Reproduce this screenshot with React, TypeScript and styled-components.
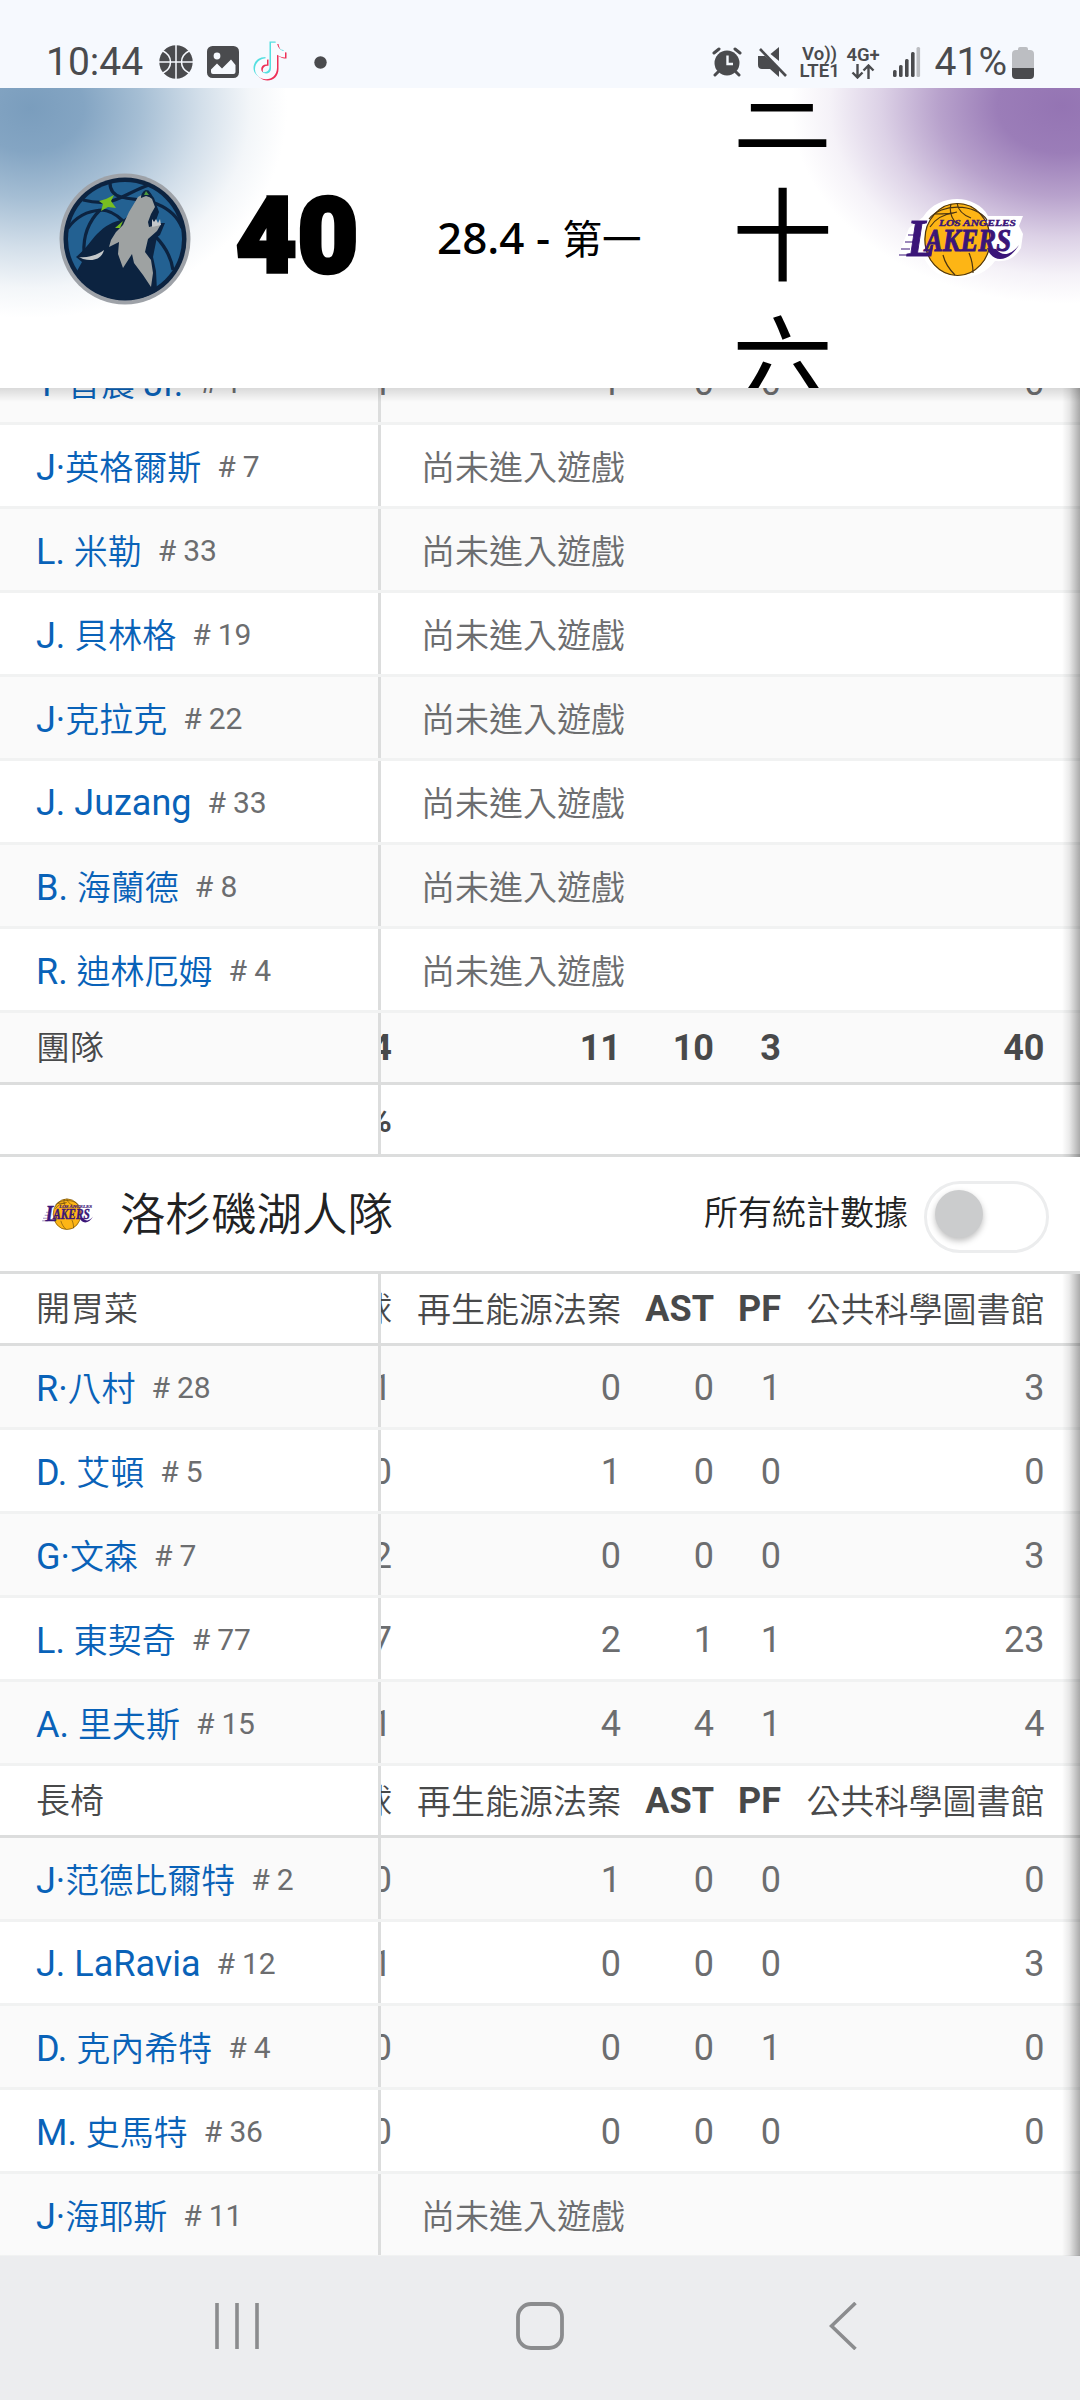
import React from "react";
import styled, { createGlobalStyle } from "styled-components";

const GlobalStyle = createGlobalStyle`
  * {
    box-sizing: border-box;
  }
  body {
    margin: 0;
    background: #fff;
    font-family: Roboto, "Noto Sans CJK TC", sans-serif;
  }
`;

const Screen = styled.div`
  width: 1080px;
  height: 2400px;
  display: flex;
  flex-direction: column;
  overflow: hidden;
  background: #fff;
`;

/* ---------- status bar ---------- */

const StatusBar = styled.div`
  flex: none;
  height: 88px;
  padding: 36px 46px 0 46px;
  display: flex;
  justify-content: space-between;
  background: #f6f9fe;
  color: #4a4b4e;
`;
const StatusGroup = styled.div`
  display: flex;
  align-items: center;
  height: 52px;
`;
const StatusText = styled.span<{ $left?: number }>`
  margin-left: ${(p) => p.$left ?? 0}px;
  font-size: 39px;
  line-height: 52px;
`;
const NetworkLabel = styled.div<{ $left: number; $width: number }>`
  margin-left: ${(p) => p.$left}px;
  width: ${(p) => p.$width}px;
  padding-top: 1px;
  display: flex;
  flex-direction: column;
  align-items: center;
  font-size: 18.5px;
  font-weight: 600;
  line-height: 17px;
  white-space: nowrap;
`;
const StatusIcon = styled.svg<{ $left: number }>`
  flex: none;
  margin-left: ${(p) => p.$left}px;
`;

/* ---------- scoreboard ---------- */

const Scoreboard = styled.div`
  flex: none;
  height: 300px;
  padding-left: 59px;
  display: flex;
  align-items: center;
  overflow: hidden;
  color: #000;
  background: radial-gradient(
      ellipse 245px 200px at 30px 20px,
      #7a9dbd 0%,
      #84a5c3 22%,
      #a5bed4 45%,
      #d3dfea 70%,
      #f3f6f9 90%,
      rgba(255, 255, 255, 0) 105%
    ),
    radial-gradient(
      ellipse 258px 188px at 1062px 18px,
      #9474b3 0%,
      #9b7db8 25%,
      #b8a2cc 48%,
      #dcd1e6 70%,
      #f5f2f8 90%,
      rgba(255, 255, 255, 0) 105%
    ),
    #fff;
`;
const ScoreboardShade = styled.div`
  position: relative;
  z-index: 1;
  flex: none;
  height: 0;
  &::after {
    content: "";
    position: absolute;
    top: 0;
    left: 0;
    right: 0;
    height: 14px;
    background: linear-gradient(rgba(0, 0, 0, 0.13), rgba(0, 0, 0, 0));
  }
`;
const HomeScore = styled.div`
  width: 122px;
  margin-left: 45px;
  padding-bottom: 3px;
  font-size: 104px;
  font-weight: 900;
  line-height: 120px;
  letter-spacing: 1.5px;
  -webkit-text-stroke: 4.5px #000;
`;
const GameClock = styled.div`
  width: 208px;
  margin-left: 79px;
  padding-bottom: 3px;
  font-family: "Noto Sans", "Noto Sans CJK TC", sans-serif;
  font-size: 44px;
  font-weight: 500;
  line-height: 60px;
  white-space: pre;
`;
const ClockPeriod = styled.span`
  margin-left: 1px;
  font-family: "Noto Sans CJK TC", sans-serif;
  font-size: 39.5px;
  font-weight: 400;
`;
const AwayScore = styled.div`
  width: 102px;
  margin: -18px 0 0 87px;
  display: flex;
  flex-direction: column;
  font-family: "Noto Sans CJK TC", sans-serif;
  font-size: 101px;
  font-weight: 400;
  line-height: 127px;
`;
const LogoSlot = styled.div<{ $left?: number }>`
  flex: none;
  display: flex;
  margin: 2px 0 0 ${(p) => p.$left ?? 0}px;
`;

/* ---------- box score ---------- */

const Sheet = styled.div`
  flex: 1;
  min-height: 0;
  overflow: hidden;
`;
const Scrolled = styled.div`
  margin-top: -47px;
`;
const TableWrap = styled.div`
  position: relative;
  &::after {
    content: "";
    position: absolute;
    top: 0;
    right: 0;
    bottom: 0;
    width: 18px;
    background: linear-gradient(
      to right,
      rgba(0, 0, 0, 0),
      rgba(0, 0, 0, 0.08) 40%,
      rgba(0, 0, 0, 0.33)
    );
  }
`;
const Row = styled.div<{ $kind: "player" | "head" | "total"; $shaded?: boolean }>`
  height: ${(p) => (p.$kind === "player" ? 84 : 72)}px;
  display: flex;
  padding-bottom: ${(p) => (p.$kind === "player" ? 0 : 3)}px;
  border-bottom: 3px solid ${(p) => (p.$kind === "player" ? "#f1f2f2" : "#dcdddd")};
  background: ${(p) => (p.$shaded ? "#fafafa" : "#fff")};
  font-size: 36px;
  color: ${(p) => (p.$kind === "player" ? "#6c6d6f" : "#48494a")};
  font-weight: ${(p) => (p.$kind === "player" ? 400 : 700)};
`;
const NameCell = styled.div<{ $short?: boolean }>`
  flex: none;
  width: 381px;
  margin-bottom: ${(p) => (p.$short ? -3 : 0)}px;
  padding: ${(p) => (p.$short ? "0 0 4px 36px" : "2px 0 0 36px")};
  display: flex;
  align-items: center;
  border-right: 3px solid #dcdddd;
  white-space: pre;
`;
const PlayerName = styled.a`
  color: #0962b8;
  line-height: 50px;
`;
const Jersey = styled.span`
  margin-left: 16px;
  font-size: 30px;
  letter-spacing: -0.2px;
`;
const Stats = styled.div`
  flex: 1;
  display: grid;
  grid-template-columns: 11px 229px 93px 67px 263.5px;
  align-items: center;
  overflow: hidden;
`;
const Stat = styled.div`
  display: flex;
  justify-content: flex-end;
  overflow: hidden;
  white-space: nowrap;
  line-height: 50px;
  padding-top: 3px;
`;
const PercentSign = styled.span`
  font-size: 34px;
`;
const NotPlayed = styled.div`
  padding: 1px 0 0 40px;
  align-self: center;
`;
const Cjk = styled.span<{ $size?: number }>`
  font-family: "Noto Sans CJK TC", sans-serif;
  font-size: ${(p) => p.$size ?? 34}px;
  font-weight: 350;
  line-height: 50px;
`;

const TeamHeader = styled.div`
  height: 117px;
  padding: 0 31px 0 42px;
  display: flex;
  align-items: center;
  border-bottom: 3px solid #dcdddd;
  color: #212223;
`;
const TeamName = styled.h2`
  margin: 0 auto 5px 25px;
  font-weight: 400;
`;
const ToggleLabel = styled.div`
  padding-bottom: 6px;
`;
const Toggle = styled.div`
  width: 125px;
  height: 72px;
  margin: 5px 0 0 16px;
  padding: 6px 8px;
  border: 3px solid #ecedee;
  border-radius: 36px;
`;
const Knob = styled.div`
  width: 48px;
  height: 48px;
  border-radius: 50%;
  background: #cbcccd;
  box-shadow: 0 3px 6px rgba(0, 0, 0, 0.25);
`;

/* ---------- navigation bar ---------- */

const NavBar = styled.div`
  flex: none;
  height: 144px;
  padding: 0 1px 4px 0;
  display: grid;
  grid-template-columns: repeat(3, 303px);
  justify-content: center;
  align-items: center;
  justify-items: center;
  background: #ecedef;
`;

const cjkRun = /([\u4e00-\u9fff]+)/;

const Mixed: React.FC<{ text: string; size?: number }> = ({ text, size }) => (
  <span>
    {text.split(cjkRun).map((part, i) =>
      cjkRun.test(part) ? (
        <Cjk key={i} $size={size}>
          {part}
        </Cjk>
      ) : (
        part
      )
    )}
  </span>
);

const WolvesLogo = () => (
  <svg width="132" height="132" viewBox="0 0 132 132">
    <circle cx="66" cy="66" r="65.5" fill="#9ea2a8" />
    <circle cx="66" cy="66" r="61.5" fill="#0c2340" />
    <circle cx="66" cy="66" r="57" fill="#236192" />
    <g fill="none" stroke="#0c2340" strokeWidth="3.2">
      <path d="M51 10c0 7 4 12 11 14 12 3 24 2 36 7 12 5 21 13 25 24" />
      <path d="M24 27c8 2 16 3 24 2 14-2 24-11 42-17" />
      <path d="M9 55c8-11 19-17 33-18 9 0 16 5 22 11" />
      <path d="M25 80c-1-17 4-31 16-43" />
      <path d="M96 63c9 9 16 20 18 34" />
    </g>
    <path
      d="M64 47c-10 1-18 6-26 14-6 6-10 14-21 23l6 5-5 9c8 15 24 29 47 29 14 0 25-4 33-9l-1-20-3-14 4-20-12-34z"
      fill="#0c2340"
    />
    <path
      d="M84 22l5-5 6 8 5 14-4 11 10 0-5 12-11 8-4 10 8 9 1 26-16-22z"
      fill="#0c2340"
    />
    <path
      d="M86 20l7 6 3 8-4 7-3 8 1 5 12-3-4 7-9 8-3 13 6 8 2 13-2 14-8-12-9-12-2-9-9 14-5-14 1-12-10 5 2-7 5-8 7-7 6-13 9-15z"
      fill="#9ea2a2"
    />
    <path d="M93 46l2 3 2-3 2 4 2-4 1 6-9 2z" fill="#c4c8ca" />
    <path d="M82 25c0-4 2-7 5-8 4 1 6 4 6 8l-6-2z" fill="#0c2340" />
    <path d="M85 22l2-4 3 4z" fill="#4c9a3f" />
    <path d="M40 28l7-2 8-4-3 6 5 7-8-1-7 4 2-7z" fill="#78be21" />
    <path d="M64 48l-8 7 5 0z" fill="#78be21" />
    <path d="M20 84c10 1 18-2 25-7-2 8-9 12-21 9z" fill="#c4c8ca" />
  </svg>
);

const LakersLogo: React.FC<{ width: number; height: number }> = ({ width, height }) => (
  <svg width={width} height={height} viewBox="0 0 124 80">
    <path
      d="M24 18C32 5 46 0 58 0s26 6 31 17h35l-4 10 4 8-2 14c-6 10-14 14-26 13-8 11-20 17-38 17-16 0-27-7-33-20H0l2-10 8-20z"
      fill="#fff"
    />
    <ellipse cx="58.5" cy="40.5" rx="33" ry="36.5" fill="#fdb515" />
    <g fill="none" stroke="#4a3412" strokeWidth="1.2">
      <path d="M30 20C42 4 76 4 88 21M31 28c6-9 14-13 24-14M52 5c-2 8 0 14 6 20M58 4c1 7 6 12 14 15M36 15c8 0 16 0 22-2M44 56c2 8 6 14 12 20M70 54c3 7 4 12 4 20" />
      <ellipse cx="58.5" cy="40.5" rx="32.6" ry="36" />
    </g>
    <g
      fill="#3a1578"
      fontFamily="Liberation Serif, serif"
      fontStyle="italic"
      fontWeight="700"
    >
      <g stroke="#3a1578" strokeWidth="1">
        <text x="8" y="56.5" fontSize="53" textLength="28" lengthAdjust="spacingAndGlyphs">
          L
        </text>
        <text x="26" y="51.5" fontSize="32" textLength="86" lengthAdjust="spacingAndGlyphs">
          AKERS
        </text>
        <text x="40" y="27" fontSize="9" strokeWidth="0.4" textLength="77" lengthAdjust="spacingAndGlyphs">
          LOS ANGELES
        </text>
      </g>
    </g>
    <path d="M88 49c6 16 22 14 32-3-7 9-16 13-23 4z" fill="#3a1578" />
    <path d="M14 24h12M9 36h9M6 43h9M2 50h9M0 56h14" stroke="#3a1578" strokeWidth="1.1" />
  </svg>
);

const BasketballIcon = () => (
  <StatusIcon $left={16} width="34" height="34" viewBox="0 0 34 34">
    <circle cx="17" cy="17" r="16.7" fill="#4a4b4e" />
    <path
      d="M17 0v34M0 17h34M4 6c10 5 10 17 0 22M30 6c-10 5-10 17 0 22"
      fill="none"
      stroke="#f6f9fe"
      strokeWidth="1.5"
    />
  </StatusIcon>
);

const GalleryIcon = () => (
  <StatusIcon $left={14} width="32" height="32" viewBox="0 0 32 32">
    <rect width="32" height="32" rx="5.5" fill="#4a4b4e" />
    <circle cx="10" cy="10" r="3.4" fill="#f6f9fe" />
    <path d="M4 23.5l6-6 5 5 9-9 4.5 5.5V26a2 2 0 0 1-2 2H6a2 2 0 0 1-2-2z" fill="#f6f9fe" />
  </StatusIcon>
);

const notePath =
  "M19 1h6c.6 5 3.6 8 8 8.6v6c-3 0-5.800-1-8-2.600v13c0 7-5 11.500-11 11.500S3 33 3 27.500c0-6.500 5-11 12-11v6.300c-3.500-.4-5.800 1.700-5.800 4.500 0 2.600 2 4.400 4.700 4.400 3 0 5.100-2 5.100-5.600z";

const NoteIcon = () => (
  <StatusIcon $left={13} width="37" height="42" viewBox="0 0 37 42">
    <path d={notePath} transform="translate(1.5 2)" fill="#ee3057" />
    <path d={notePath} transform="translate(-1.5 -.5)" fill="#55dfe0" />
    <path d={notePath} transform="translate(0 .8)" fill="#f9fbff" />
  </StatusIcon>
);

const AlarmIcon = () => (
  <StatusIcon $left={0} width="30" height="30" viewBox="0 0 30 30">
    <g stroke="#4a4b4e" strokeWidth="3" strokeLinecap="round" fill="none">
      <path d="M2 6l5-4M28 6l-5-4M6 25l-3 3M24 25l3 3" />
    </g>
    <circle cx="15" cy="16" r="12.5" fill="#4a4b4e" />
    <path d="M15.5 8.5v8.5h5.5" fill="none" stroke="#f6f9fe" strokeWidth="2.4" />
  </StatusIcon>
);

const MuteIcon = () => (
  <StatusIcon $left={15} width="31" height="32" viewBox="0 0 31 32">
    <path d="M22 1v14L13.5 8z" fill="#4a4b4e" />
    <path d="M1 10h7l14 12v9l-9-8H5c-2.500 0-4-1.500-4-4z" fill="#4a4b4e" />
    <path d="M3 3l26 27" stroke="#4a4b4e" strokeWidth="2.6" />
  </StatusIcon>
);

const DataArrows = () => (
  <svg width="24" height="15" viewBox="0 0 24 15">
    <path
      d="M6.5 0v13M1.5 8.5l5 5 5-5M17.5 15V2M12.5 6.5l5-5 5 5"
      fill="none"
      stroke="#4a4b4e"
      strokeWidth="2.4"
    />
  </svg>
);

const SignalIcon = () => (
  <StatusIcon $left={13} width="28" height="30" viewBox="0 0 28 30">
    <g fill="#4a4b4e">
      <rect x="0" y="23" width="3.6" height="7" rx="1.5" />
      <rect x="6" y="18" width="3.6" height="12" rx="1.5" />
      <rect x="12" y="12" width="3.6" height="18" rx="1.5" />
      <rect x="18" y="5" width="3.6" height="25" rx="1.5" />
    </g>
    <rect x="23.5" y="0" width="3.6" height="30" rx="1.5" fill="#bcbec2" />
  </StatusIcon>
);

const BatteryIcon = () => (
  <StatusIcon $left={5} width="22" height="33" viewBox="0 0 22 33">
    <path d="M6 3a2 2 0 0 1 2-2h6a2 2 0 0 1 2 2v1h2a4 4 0 0 1 4 4v15H0V8a4 4 0 0 1 4-4h2z" fill="#bcbec2" />
    <path d="M0 22h22v7a4 4 0 0 1-4 4H4a4 4 0 0 1-4-4z" fill="#4a4b4e" />
  </StatusIcon>
);

interface Player {
  name: string;
  number: number;
  stats?: string[];
}

const wolvesBench: Player[] = [
  { name: "T·普農 Jr.", number: 1, stats: ["1", "1", "0", "0", "0"] },
  { name: "J·英格爾斯", number: 7 },
  { name: "L. 米勒", number: 33 },
  { name: "J. 貝林格", number: 19 },
  { name: "J·克拉克", number: 22 },
  { name: "J. Juzang", number: 33 },
  { name: "B. 海蘭德", number: 8 },
  { name: "R. 迪林厄姆", number: 4 },
];

const lakersStarters: Player[] = [
  { name: "R·八村", number: 28, stats: ["1", "0", "0", "1", "3"] },
  { name: "D. 艾頓", number: 5, stats: ["0", "1", "0", "0", "0"] },
  { name: "G·文森", number: 7, stats: ["2", "0", "0", "0", "3"] },
  { name: "L. 東契奇", number: 77, stats: ["7", "2", "1", "1", "23"] },
  { name: "A. 里夫斯", number: 15, stats: ["1", "4", "4", "1", "4"] },
];

const lakersBench: Player[] = [
  { name: "J·范德比爾特", number: 2, stats: ["0", "1", "0", "0", "0"] },
  { name: "J. LaRavia", number: 12, stats: ["1", "0", "0", "0", "3"] },
  { name: "D. 克內希特", number: 4, stats: ["0", "0", "0", "1", "0"] },
  { name: "M. 史馬特", number: 36, stats: ["0", "0", "0", "0", "0"] },
  { name: "J·海耶斯", number: 11 },
];

const headings = ["籃球", "再生能源法案", "AST", "PF", "公共科學圖書館"];

const StatCells: React.FC<{ values: string[] }> = ({ values }) => (
  <Stats>
    {values.map((value, i) => (
      <Stat key={i}>
        <Mixed text={value} />
      </Stat>
    ))}
  </Stats>
);

const PlayerRows: React.FC<{ players: Player[] }> = ({ players }) => (
  <>
    {players.map((player, i) => (
      <Row key={player.name} $kind="player" $shaded={i % 2 === 0}>
        <NameCell>
          <PlayerName>
            <Mixed text={player.name} />
          </PlayerName>
          <Jersey># {player.number}</Jersey>
        </NameCell>
        {player.stats ? (
          <StatCells values={player.stats} />
        ) : (
          <NotPlayed>
            <Cjk>尚未進入遊戲</Cjk>
          </NotPlayed>
        )}
      </Row>
    ))}
  </>
);

const HeadRow: React.FC<{ title: string }> = ({ title }) => (
  <Row $kind="head">
    <NameCell $short>
      <Mixed text={title} />
    </NameCell>
    <StatCells values={headings} />
  </Row>
);

const App: React.FC = () => {
  return (
    <>
      <GlobalStyle />
      <Screen>
        <StatusBar>
          <StatusGroup>
            <StatusText>10:44</StatusText>
            <BasketballIcon />
            <GalleryIcon />
            <NoteIcon />
            <StatusIcon $left={25} width="13" height="13">
              <circle cx="6.5" cy="6.5" r="6.2" fill="#4a4b4e" />
            </StatusIcon>
          </StatusGroup>
          <StatusGroup>
            <AlarmIcon />
            <MuteIcon />
            <NetworkLabel $left={13} $width={38}>
              <span>Vo))</span>
              <span>LTE1</span>
            </NetworkLabel>
            <NetworkLabel $left={8} $width={33}>
              <span>4G+</span>
              <DataArrows />
            </NetworkLabel>
            <SignalIcon />
            <StatusText $left={14}>41%</StatusText>
            <BatteryIcon />
          </StatusGroup>
        </StatusBar>

        <Scoreboard>
          <LogoSlot>
            <WolvesLogo />
          </LogoSlot>
          <HomeScore>40</HomeScore>
          <GameClock>
            28.4 - <ClockPeriod>第一</ClockPeriod>
          </GameClock>
          <AwayScore>
            <span>三</span>
            <span>十</span>
            <span>六</span>
          </AwayScore>
          <LogoSlot $left={65}>
            <LakersLogo width={124} height={80} />
          </LogoSlot>
        </Scoreboard>
        <ScoreboardShade />

        <Sheet>
          <Scrolled>
            <TableWrap>
              <PlayerRows players={wolvesBench} />
              <Row $kind="total" $shaded>
                <NameCell $short>
                  <Mixed text="團隊" />
                </NameCell>
                <StatCells values={["14", "11", "10", "3", "40"]} />
              </Row>
              <Row $kind="total">
                <NameCell $short />
                <Stats>
                  <Stat>
                    <PercentSign>%</PercentSign>
                  </Stat>
                </Stats>
              </Row>
            </TableWrap>
            <TeamHeader>
              <LakersLogo width={53} height={34} />
              <TeamName>
                <Cjk $size={45.5}>洛杉磯湖人隊</Cjk>
              </TeamName>
              <ToggleLabel>
                <Cjk>所有統計數據</Cjk>
              </ToggleLabel>
              <Toggle>
                <Knob />
              </Toggle>
            </TeamHeader>
            <TableWrap>
              <HeadRow title="開胃菜" />
              <PlayerRows players={lakersStarters} />
              <HeadRow title="長椅" />
              <PlayerRows players={lakersBench} />
            </TableWrap>
          </Scrolled>
        </Sheet>

        <NavBar>
          <svg width="44" height="48" viewBox="0 0 44 48">
            <path d="M2 1v46M22 1v46M42 1v46" stroke="#8b8c8e" strokeWidth="3.6" />
          </svg>
          <svg width="48" height="48" viewBox="0 0 48 48">
            <rect x="2" y="2" width="44" height="44" rx="13" fill="none" stroke="#8b8c8e" strokeWidth="3.8" />
          </svg>
          <svg width="28" height="48" viewBox="0 0 28 48">
            <path d="M26.5 1L2.5 24l24 23" fill="none" stroke="#8b8c8e" strokeWidth="3.6" />
          </svg>
        </NavBar>
      </Screen>
    </>
  );
};

export default App;
